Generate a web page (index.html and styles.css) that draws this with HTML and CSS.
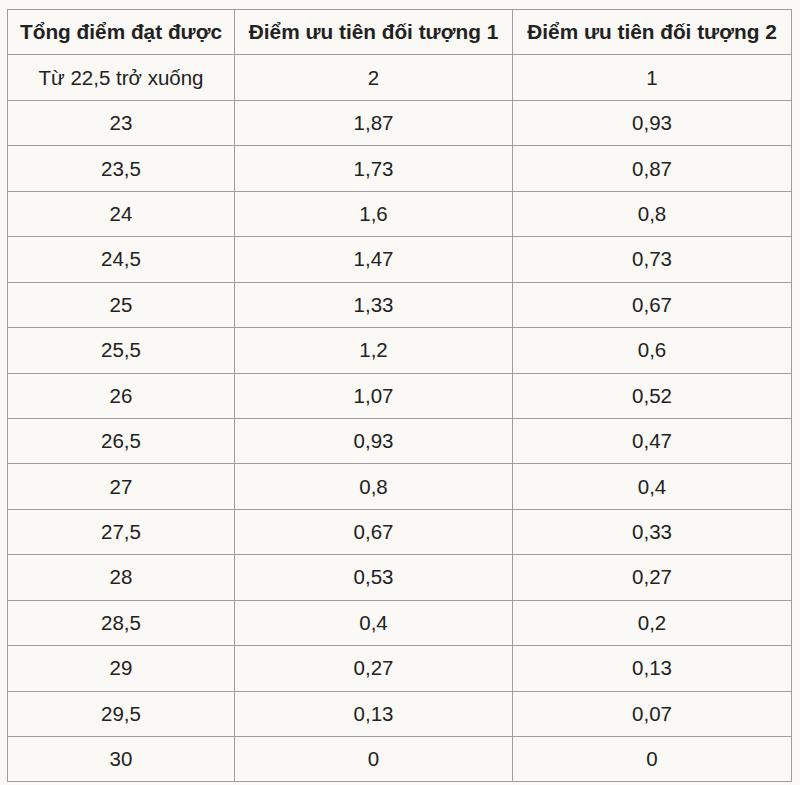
FILE: index.html
```html
<!DOCTYPE html>
<html lang="vi">
<head>
<meta charset="utf-8">
<link rel="stylesheet" href="styles.css">
</head>
<body>
<table class="score-table">
  <colgroup>
    <col class="c1"><col class="c2"><col class="c3">
  </colgroup>
  <thead>
    <tr><th>Tổng điểm đạt được</th><th>Điểm ưu tiên đối tượng 1</th><th>Điểm ưu tiên đối tượng 2</th></tr>
  </thead>
  <tbody>
    <tr><td>Từ 22,5 trở xuống</td><td>2</td><td>1</td></tr>
    <tr><td>23</td><td>1,87</td><td>0,93</td></tr>
    <tr><td>23,5</td><td>1,73</td><td>0,87</td></tr>
    <tr><td>24</td><td>1,6</td><td>0,8</td></tr>
    <tr><td>24,5</td><td>1,47</td><td>0,73</td></tr>
    <tr><td>25</td><td>1,33</td><td>0,67</td></tr>
    <tr><td>25,5</td><td>1,2</td><td>0,6</td></tr>
    <tr><td>26</td><td>1,07</td><td>0,52</td></tr>
    <tr><td>26,5</td><td>0,93</td><td>0,47</td></tr>
    <tr><td>27</td><td>0,8</td><td>0,4</td></tr>
    <tr><td>27,5</td><td>0,67</td><td>0,33</td></tr>
    <tr><td>28</td><td>0,53</td><td>0,27</td></tr>
    <tr><td>28,5</td><td>0,4</td><td>0,2</td></tr>
    <tr><td>29</td><td>0,27</td><td>0,13</td></tr>
    <tr><td>29,5</td><td>0,13</td><td>0,07</td></tr>
    <tr><td>30</td><td>0</td><td>0</td></tr>
  </tbody>
</table>
</body>
</html>
```
FILE: styles.css
```css
html, body {
  margin: 0;
  padding: 0;
  background: #faf9f6;
}
body {
  padding: 9px 0 0 7px;
  font-family: "Liberation Sans", Arial, sans-serif;
  color: #222;
}
.score-table {
  border-collapse: collapse;
  width: 784px;
  table-layout: fixed;
  font-size: 20.5px;
}
.c1 { width: 227px; }
.c2 { width: 278px; }
.c3 { width: 279px; }
.score-table th,
.score-table td {
  border: 1px solid #9e9e9e;
  height: 45.45px;
  padding: 0;
  text-align: center;
  vertical-align: middle;
  box-sizing: border-box;
}
.score-table th {
  font-weight: bold;
  font-size: 20.8px;
}
```
